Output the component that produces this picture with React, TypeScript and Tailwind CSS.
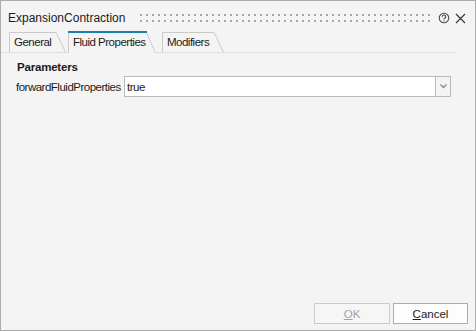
import React from "react";

function Tab({ label, width, active }: { label: string; width: number; active?: boolean }) {
  const h = active ? 22 : 20;
  const slant = 10;
  return (
    <div
      className={`relative shrink-0 ${active ? "h-[22px] mb-[-1px] z-10" : "h-[20px]"}`}
      style={{ width }}
    >
      <svg className="absolute inset-0" width={width} height={h}>
        <path
          d={`M0.5 ${h} V0.5 H${width - slant} L${width - 0.5} ${h}`}
          fill="#f4f4f4"
          stroke="#cacaca"
          strokeWidth="1"
        />
        {active && <rect x="0" y="0" width={width - slant + 1} height="2" fill="#1a7fae" />}
      </svg>
      <span
        className={`relative block whitespace-nowrap leading-[14px] text-[11.5px] tracking-[-0.5px] ${
          active ? "pl-[5px] pt-[4px]" : "pl-[5px] pt-[3px]"
        }`}
      >
        {label}
      </span>
    </div>
  );
}

export default function App() {
  return (
    <div className="w-[476px] h-[331px] border border-[#acacac] bg-[#f4f4f4] flex flex-col font-['Liberation_Sans',Arial,sans-serif] text-[12px] text-[#1b1b1b]">
      {/* title bar */}
      <div className="h-[30px] flex items-center pl-[7px] pr-[8px] pt-[4px]">
        <span className="leading-[14px] whitespace-nowrap">ExpansionContraction</span>
        <svg className="ml-[15px]" width="290" height="8">
          <defs>
            <pattern id="grip" width="6" height="6" patternUnits="userSpaceOnUse">
              <rect x="0" y="0" width="2" height="2" fill="#a8a8a8" />
            </pattern>
          </defs>
          <rect x="0" y="0" width="290" height="8" fill="url(#grip)" />
        </svg>
        <svg className="ml-[8px]" width="12" height="12" viewBox="0 0 12 12">
          <circle cx="6" cy="6" r="4.8" fill="none" stroke="#4a4a4a" strokeWidth="1.1" />
          <path d="M4.3 4.8 A1.7 1.7 0 1 1 6.6 6.3 Q6 6.6 6 7.3" fill="none" stroke="#4a4a4a" strokeWidth="1.1" />
          <rect x="5.45" y="8.1" width="1.1" height="1.1" fill="#4a4a4a" />
        </svg>
        <svg className="ml-[5px]" width="11" height="11" viewBox="0 0 11 11">
          <path d="M1 1 L10 10 M10 1 L1 10" stroke="#3a3a3a" strokeWidth="1.2" />
        </svg>
      </div>

      {/* tabs */}
      <div className="flex items-end h-[22px] border-b border-[#dedede] mr-[18px] pl-[8px]">
        <Tab label="General" width={57} />
        <div className="ml-[2px]">
          <Tab label="Fluid Properties" width={88} active />
        </div>
        <div className="ml-[6px]">
          <Tab label="Modifiers" width={62} />
        </div>
      </div>

      {/* content */}
      <div className="pl-[15px] pt-[7px] text-[11.5px] tracking-[-0.5px]">
        <div className="font-bold leading-[14px] pl-[1px] tracking-[-0.2px]">Parameters</div>
        <div className="flex items-center mt-[2px]">
          <div className="w-[108px] leading-[14px] whitespace-nowrap">forwardFluidProperties</div>
          <div className="flex h-[21px] w-[327px]">
            <div className="flex-1 border border-[#b9b9b9] bg-white flex items-center pl-[2px] leading-[14px]">true</div>
            <div className="w-[15px] border border-l-0 border-[#b9b9b9] bg-[#f4f4f4] flex items-center justify-center">
              <svg width="7" height="5" viewBox="0 0 7 5">
                <path d="M0.5 0.5 L3.5 3.5 L6.5 0.5" fill="none" stroke="#8a8a8a" strokeWidth="1.4" />
              </svg>
            </div>
          </div>
        </div>
      </div>

      <div className="flex-1" />

      {/* footer */}
      <div className="flex justify-end gap-[3px] pr-[7px] pb-[6px] text-[11.5px]">
        <button className="w-[76px] h-[21px] border border-[#cbcbcb] bg-[#f6f6f6] text-[#a3a3a3] leading-[14px]">
          <span className="underline">O</span>K
        </button>
        <button className="w-[75px] h-[21px] border border-[#adadad] bg-[#fdfdfd] text-[#1b1b1b] leading-[14px]">
          <span className="underline">C</span>ancel
        </button>
      </div>
    </div>
  );
}
